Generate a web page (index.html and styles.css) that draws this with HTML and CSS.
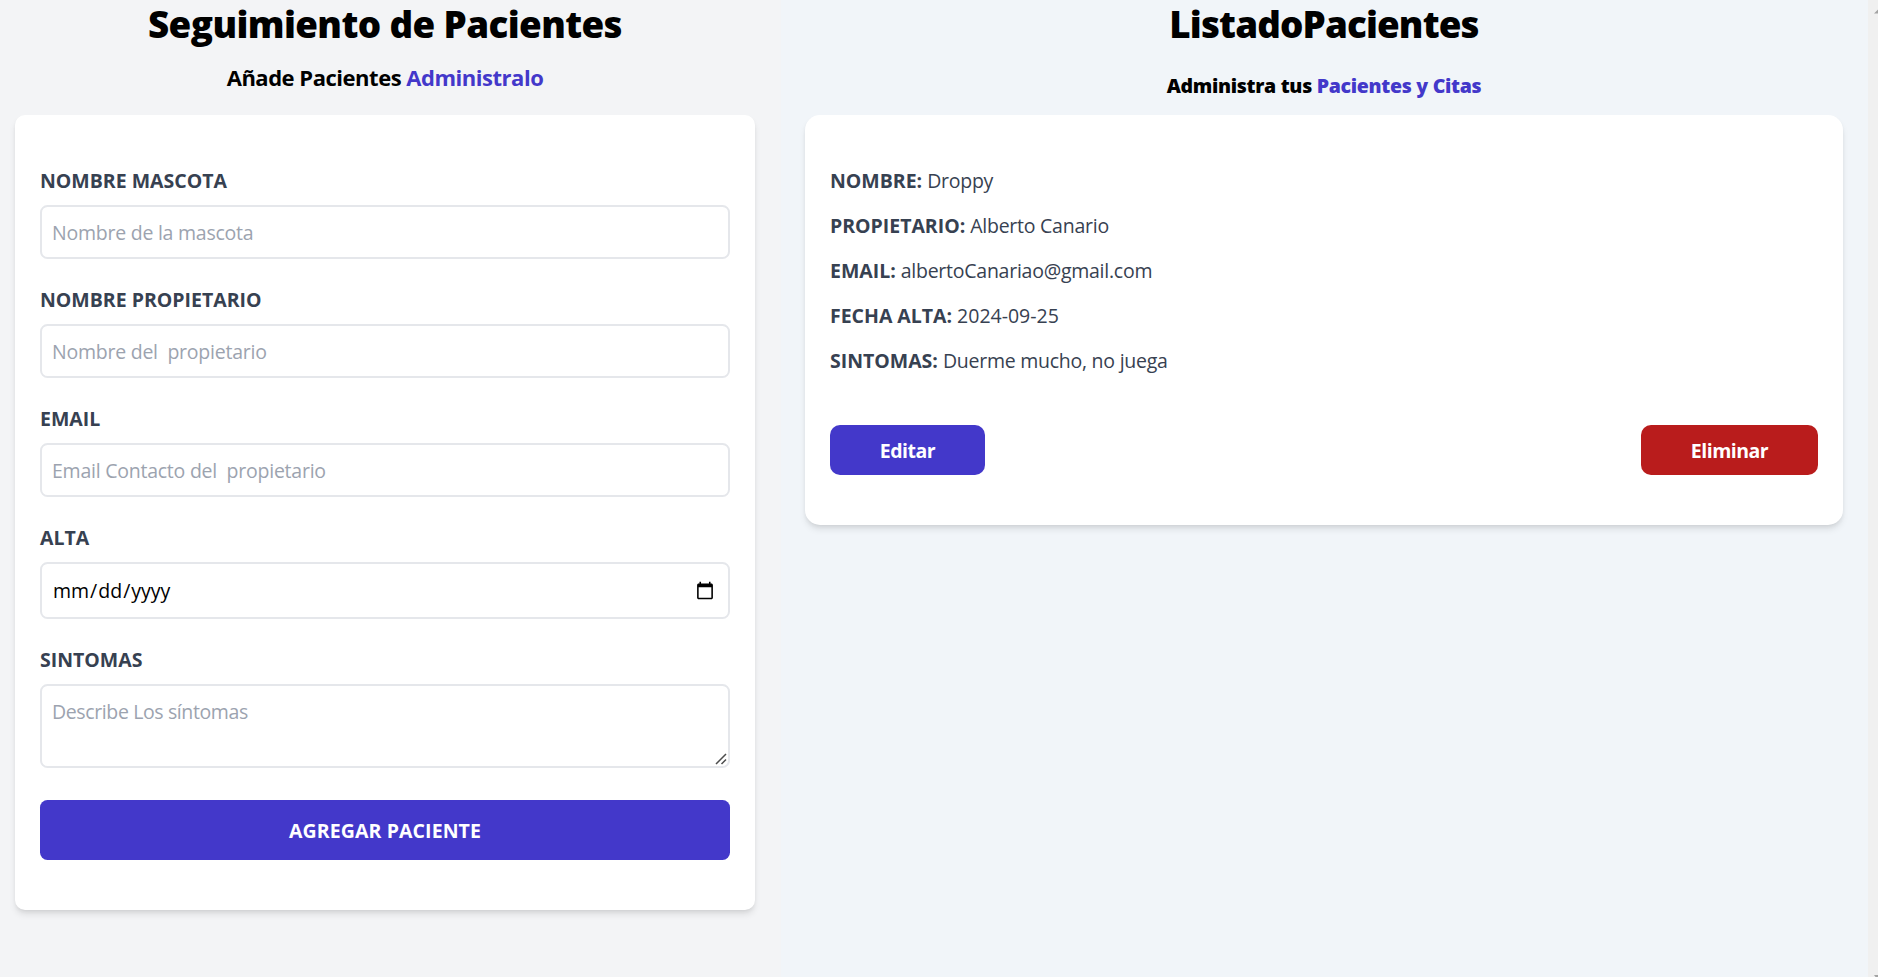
FILE: index.html
```html
<!DOCTYPE html>
<html lang="en">
<head>
<meta charset="utf-8">
<title>Seguimiento de Pacientes</title>
<link rel="stylesheet" href="styles.css">
</head>
<body>
<div class="app">
  <section class="form-panel">
    <h1 class="title">Seguimiento de Pacientes</h1>
    <p class="form-subtitle">Añade Pacientes <span class="accent">Administralo</span></p>
    <form class="card form-card">
      <div class="field">
        <label class="label" for="mascota">NOMBRE MASCOTA</label>
        <input class="control" id="mascota" type="text" placeholder="Nombre de la mascota">
      </div>
      <div class="field">
        <label class="label" for="propietario">NOMBRE PROPIETARIO</label>
        <input class="control" id="propietario" type="text" placeholder="Nombre del  propietario">
      </div>
      <div class="field">
        <label class="label" for="email">EMAIL</label>
        <input class="control" id="email" type="email" placeholder="Email Contacto del  propietario">
      </div>
      <div class="field">
        <label class="label" for="alta">ALTA</label>
        <input class="control control-date" id="alta" type="date">
      </div>
      <div class="field field-last">
        <label class="label" for="sintomas">SINTOMAS</label>
        <textarea class="control control-area" id="sintomas" placeholder="Describe Los síntomas"></textarea>
        <svg class="grip" width="12" height="12" viewBox="0 0 12 12" fill="none" stroke="#4d4d4d" stroke-width="1.5"><path d="M1 11L11 1M6.5 11L11 6.5"/></svg>
      </div>
      <button class="submit" type="button">AGREGAR PACIENTE</button>
    </form>
  </section>
  <section class="list-panel">
    <h2 class="title title-list">ListadoPacientes</h2>
    <p class="list-subtitle">Administra tus <span class="accent">Pacientes y Citas</span></p>
    <article class="card patient">
      <p class="detail">NOMBRE: <span class="value">Droppy</span></p>
      <p class="detail">PROPIETARIO: <span class="value">Alberto Canario</span></p>
      <p class="detail">EMAIL: <span class="value">albertoCanariao@gmail.com</span></p>
      <p class="detail">FECHA ALTA: <span class="value value-date">2024-09-25</span></p>
      <p class="detail">SINTOMAS: <span class="value">Duerme mucho, no juega</span></p>
      <div class="actions">
        <button class="action edit" type="button">Editar</button>
        <button class="action delete" type="button">Eliminar</button>
      </div>
    </article>
  </section>
  <div class="scrollbar">
    <svg width="10" height="16" viewBox="0 0 10 16"><path d="M6 13.5L10 9.5V13.5z" fill="#a3a3a3"/></svg>
    <svg width="10" height="2" viewBox="0 0 10 2"><path d="M6 0H10V2H7.5z" fill="#a3a3a3"/></svg>
  </div>
</div>
</body>
</html>
```
FILE: styles.css
```css
* { box-sizing: border-box; margin: 0; }

body {
  height: 977px;
  overflow: hidden;
  background: #f1f5f9;
  color: #000;
  font: 400 19.5px/30px "Open Sans", "Noto Sans", sans-serif;
}

.app { display: flex; height: 977px; }

.form-panel {
  width: 781px;
  padding: 0 26px 0 15px;
  background: #f3f4f6;
}

.list-panel { flex: 1; padding: 0 25px 0 24px; }

.title {
  height: 45px;
  padding-top: 2px;
  font-size: 36.75px;
  line-height: 45px;
  font-weight: 800;
  letter-spacing: -0.6px;
  text-align: center;
}

.title-list { letter-spacing: -0.85px; }

.form-subtitle {
  margin: 15px 0 20px;
  font-size: 22px;
  line-height: 35px;
  font-weight: 700;
  letter-spacing: -0.48px;
  text-align: center;
}

.list-subtitle {
  height: 30px;
  margin: 25px 0 15px;
  padding-top: 1px;
  font-weight: 800;
  letter-spacing: -0.3px;
  text-align: center;
}

.accent { color: #4338ca; }

.card {
  padding: 50px 25px;
  background: #fff;
  border-radius: 10px;
  box-shadow: 0 5px 7.5px -1.25px rgba(0, 0, 0, .1), 0 2.5px 5px -2.5px rgba(0, 0, 0, .1);
}

.field { position: relative; margin-bottom: 25px; }
.field-last { margin-bottom: 32px; }

.label {
  display: block;
  height: 30px;
  margin-bottom: 10px;
  padding-top: 1px;
  color: #374151;
  font-weight: 700;
}

.control {
  display: block;
  width: 100%;
  height: 54px;
  padding: 11px 10px 10px;
  border: 2px solid #e5e7eb;
  border-radius: 7.5px;
  outline: 0;
  background: #fff;
  color: #000;
  font: inherit;
  letter-spacing: -0.24px;
}

.control::placeholder { color: #9ca3af; opacity: 1; }
.control-date { height: 57px; letter-spacing: 0; }
.control-date::-webkit-calendar-picker-indicator { width: 20px; height: 20px; margin-right: 1px; }
.control-area { height: 84px; resize: none; letter-spacing: -0.38px; }

/* Resize handle in the textarea's corner */
.grip { position: absolute; right: 3px; bottom: 3px; }

.submit {
  display: block;
  width: 100%;
  height: 60px;
  padding-top: 2px;
  border: 0;
  border-radius: 7.5px;
  background: #4338ca;
  color: #fff;
  font: inherit;
  font-weight: 700;
  letter-spacing: .1px;
}

.patient { border-radius: 15px; }

.detail {
  height: 30px;
  margin-bottom: 15px;
  padding-top: 1px;
  color: #374151;
  font-weight: 700;
  letter-spacing: -0.02px;
}

.value { font-weight: 400; letter-spacing: -0.25px; }
.value-date { letter-spacing: 0; }

.actions {
  display: flex;
  justify-content: space-between;
  margin-top: 50px;
}

.action {
  height: 50px;
  padding-top: 2px;
  border: 0;
  border-radius: 10px;
  color: #fff;
  font: inherit;
  font-weight: 700;
  letter-spacing: -0.5px;
}

.edit { width: 155px; background: #4338ca; }
.delete { width: 177px; background: #b91c1c; }

.scrollbar {
  display: flex;
  flex-direction: column;
  justify-content: space-between;
  width: 10px;
  background: #f0f0f0;
}
```
